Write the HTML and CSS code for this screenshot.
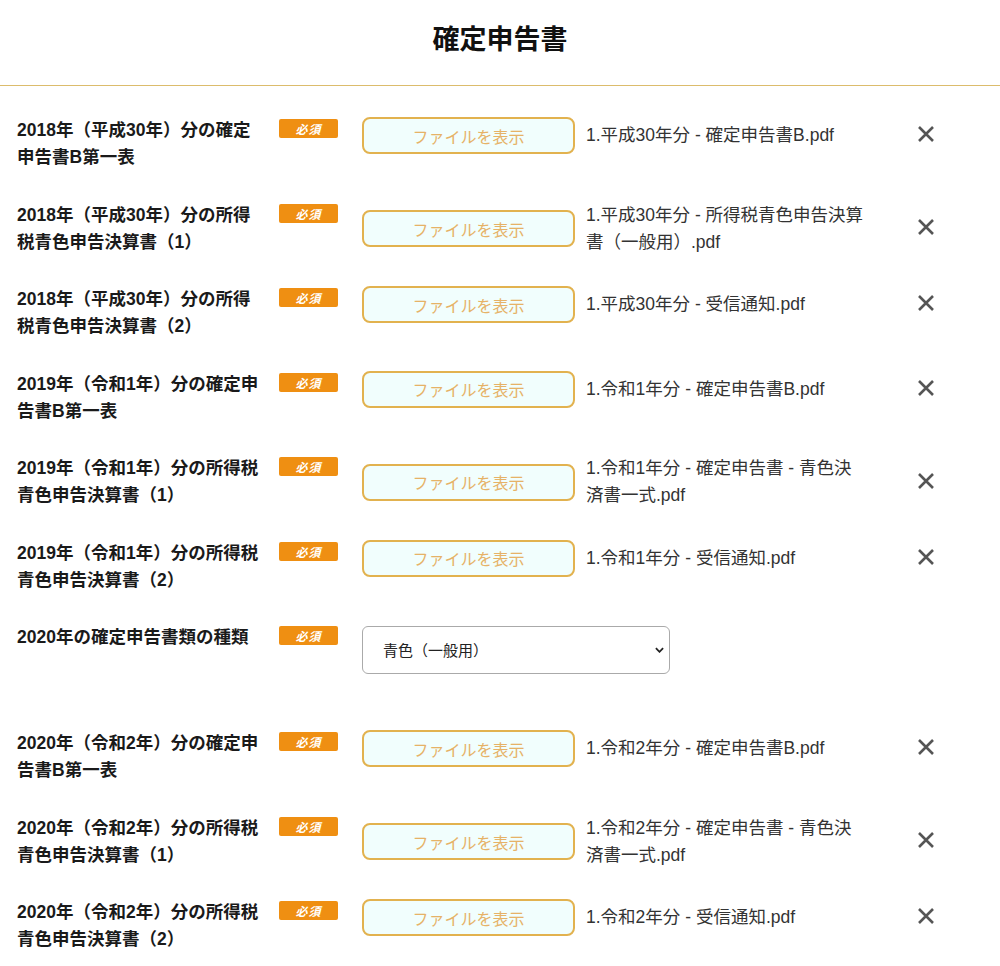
FILE: index.html
```html
<!DOCTYPE html>
<html lang="ja">
<head>
  <meta charset="UTF-8">
  <meta name="viewport" content="width=device-width, initial-scale=1.0">
  <title>確定申告書</title>
  <link rel="stylesheet" href="styles.css">
</head>
<body>
  <header class="page-header">
    <h1>確定申告書</h1>
  </header>

  <div class="form">
    <div class="row">
      <div class="label">2018年（平成30年）分の確定申告書B第一表</div>
      <span class="badge">必須</span>
      <div class="field">
        <button class="btn-file">ファイルを表示</button>
        <div class="file-name">1.平成30年分 - 確定申告書B.pdf</div>
        <button class="btn-remove" aria-label="削除"><svg viewBox="0 0 18 18"><path d="M2 2L16 16M16 2L2 16"/></svg></button>
      </div>
    </div>

    <div class="row">
      <div class="label">2018年（平成30年）分の所得税青色申告決算書（1）</div>
      <span class="badge">必須</span>
      <div class="field">
        <button class="btn-file">ファイルを表示</button>
        <div class="file-name">1.平成30年分 - 所得税青色申告決算書（一般用）.pdf</div>
        <button class="btn-remove" aria-label="削除"><svg viewBox="0 0 18 18"><path d="M2 2L16 16M16 2L2 16"/></svg></button>
      </div>
    </div>

    <div class="row">
      <div class="label">2018年（平成30年）分の所得税青色申告決算書（2）</div>
      <span class="badge">必須</span>
      <div class="field">
        <button class="btn-file">ファイルを表示</button>
        <div class="file-name">1.平成30年分 - 受信通知.pdf</div>
        <button class="btn-remove" aria-label="削除"><svg viewBox="0 0 18 18"><path d="M2 2L16 16M16 2L2 16"/></svg></button>
      </div>
    </div>

    <div class="row">
      <div class="label">2019年（令和1年）分の確定申告書B第一表</div>
      <span class="badge">必須</span>
      <div class="field">
        <button class="btn-file">ファイルを表示</button>
        <div class="file-name">1.令和1年分 - 確定申告書B.pdf</div>
        <button class="btn-remove" aria-label="削除"><svg viewBox="0 0 18 18"><path d="M2 2L16 16M16 2L2 16"/></svg></button>
      </div>
    </div>

    <div class="row">
      <div class="label">2019年（令和1年）分の所得税青色申告決算書（1）</div>
      <span class="badge">必須</span>
      <div class="field">
        <button class="btn-file">ファイルを表示</button>
        <div class="file-name">1.令和1年分 - 確定申告書 - 青色決済書一式.pdf</div>
        <button class="btn-remove" aria-label="削除"><svg viewBox="0 0 18 18"><path d="M2 2L16 16M16 2L2 16"/></svg></button>
      </div>
    </div>

    <div class="row">
      <div class="label">2019年（令和1年）分の所得税青色申告決算書（2）</div>
      <span class="badge">必須</span>
      <div class="field">
        <button class="btn-file">ファイルを表示</button>
        <div class="file-name">1.令和1年分 - 受信通知.pdf</div>
        <button class="btn-remove" aria-label="削除"><svg viewBox="0 0 18 18"><path d="M2 2L16 16M16 2L2 16"/></svg></button>
      </div>
    </div>

    <div class="row row-select">
      <div class="label">2020年の確定申告書類の種類</div>
      <span class="badge">必須</span>
      <div class="select-wrap">
        <select class="select">
          <option>青色（一般用）</option>
          <option>白色</option>
        </select>
        <svg class="chevron" viewBox="0 0 10 6"><path d="M1 1L5 5L9 1"/></svg>
      </div>
    </div>

    <div class="row">
      <div class="label">2020年（令和2年）分の確定申告書B第一表</div>
      <span class="badge">必須</span>
      <div class="field">
        <button class="btn-file">ファイルを表示</button>
        <div class="file-name">1.令和2年分 - 確定申告書B.pdf</div>
        <button class="btn-remove" aria-label="削除"><svg viewBox="0 0 18 18"><path d="M2 2L16 16M16 2L2 16"/></svg></button>
      </div>
    </div>

    <div class="row">
      <div class="label">2020年（令和2年）分の所得税青色申告決算書（1）</div>
      <span class="badge">必須</span>
      <div class="field">
        <button class="btn-file">ファイルを表示</button>
        <div class="file-name">1.令和2年分 - 確定申告書 - 青色決済書一式.pdf</div>
        <button class="btn-remove" aria-label="削除"><svg viewBox="0 0 18 18"><path d="M2 2L16 16M16 2L2 16"/></svg></button>
      </div>
    </div>

    <div class="row">
      <div class="label">2020年（令和2年）分の所得税青色申告決算書（2）</div>
      <span class="badge">必須</span>
      <div class="field">
        <button class="btn-file">ファイルを表示</button>
        <div class="file-name">1.令和2年分 - 受信通知.pdf</div>
        <button class="btn-remove" aria-label="削除"><svg viewBox="0 0 18 18"><path d="M2 2L16 16M16 2L2 16"/></svg></button>
      </div>
    </div>
  </div>
</body>
</html>
```

FILE: styles.css
```css
body {
  margin: 0;
  background-color: #fff;
  color: #222;
  font-family: "Liberation Sans", "Noto Sans CJK JP", sans-serif;
}
.page-header {
  height: 85px;
  display: flex;
  align-items: center;
  justify-content: center;
  border-bottom: 1px solid #dcbc6c;
}
.page-header h1 {
  margin: 0 0 10px;
  font-size: 27px;
  font-weight: bold;
  color: #111;
}
.form {
  padding: 31px 0 0 17px;
}
.row {
  display: flex;
  align-items: flex-start;
  margin-bottom: 30.5px;
}
.row-select {
  margin-bottom: 56px;
}
.label {
  flex: 0 0 246px;
  margin-right: 16px;
  font-size: 17.5px;
  font-weight: bold;
  line-height: 27px;
  color: #1a1a1a;
}
.badge {
  flex: 0 0 59px;
  height: 19px;
  margin: 2px 24px 0 0;
  background-color: #ef8f12;
  border-radius: 2px;
  color: #fff;
  font-family: "Noto Sans CJK JP", serif;
  font-size: 12px;
  font-weight: bold;
  font-style: italic;
  line-height: 19px;
  text-align: center;
  letter-spacing: 1px;
}
.field {
  display: flex;
  align-items: center;
}
.btn-file {
  flex: 0 0 213px;
  height: 37px;
  margin-right: 11px;
  background-color: #f1fefd;
  border: 2px solid #e2b24f;
  border-radius: 8px;
  color: #e6b267;
  font-family: inherit;
  font-size: 16px;
  cursor: pointer;
}
.file-name {
  flex: 0 0 280px;
  font-size: 17.5px;
  line-height: 27px;
  color: #333;
}
.btn-remove {
  margin-left: 49px;
  padding: 0;
  width: 22px;
  height: 22px;
  background: none;
  border: none;
  cursor: pointer;
}
.btn-remove svg {
  width: 18px;
  height: 18px;
  stroke: #555;
  stroke-width: 2.6;
  fill: none;
}
.select-wrap {
  position: relative;
  margin-top: 2px;
}
.select {
  width: 308px;
  height: 48px;
  padding: 0 30px 0 20px;
  border: 1px solid #aaa;
  border-radius: 6px;
  background-color: #fff;
  font-family: inherit;
  font-size: 15px;
  color: #222;
  appearance: none;
}
.chevron {
  position: absolute;
  right: 6px;
  top: 21px;
  width: 9px;
  height: 6px;
  stroke: #222;
  stroke-width: 2;
  fill: none;
  pointer-events: none;
}
```
